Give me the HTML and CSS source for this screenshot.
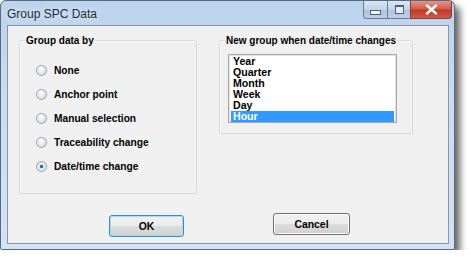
FILE: index.html
```html
<!DOCTYPE html>
<html>
<head>
    <meta charset="utf-8">
    <title>Group SPC Data</title>
    <link rel="stylesheet" href="styles.css">
</head>
<body>
    <div class="window">
        <div class="titlebar">
            <span class="title">Group SPC Data</span>
            <div class="caption-buttons">
                <div class="cap-btn cap-min"><span class="min-glyph"></span></div>
                <div class="cap-btn cap-max"><span class="max-glyph"></span></div>
                <div class="cap-btn cap-close">
                    <svg width="13" height="11" viewBox="0 0 13 11">
                        <path d="M2 1.5 L11 9.5 M11 1.5 L2 9.5" stroke="#fff" stroke-width="2.4" stroke-linecap="round"/>
                    </svg>
                </div>
            </div>
        </div>

        <div class="client">
            <div class="groups">
                <fieldset class="group group-by">
                    <legend>Group data by</legend>
                    <div class="group-body">
                        <div class="radio"><span class="dot"></span>None</div>
                        <div class="radio"><span class="dot"></span>Anchor point</div>
                        <div class="radio"><span class="dot"></span>Manual selection</div>
                        <div class="radio"><span class="dot"></span>Traceability change</div>
                        <div class="radio"><span class="dot checked"></span>Date/time change</div>
                    </div>
                </fieldset>

                <fieldset class="group group-time">
                    <legend>New group when date/time changes</legend>
                    <div class="group-body">
                        <div class="listbox">
                            <div class="item">Year</div>
                            <div class="item">Quarter</div>
                            <div class="item">Month</div>
                            <div class="item">Week</div>
                            <div class="item">Day</div>
                            <div class="item selected">Hour</div>
                        </div>
                    </div>
                </fieldset>
            </div>

            <div class="buttons">
                <div class="btn btn-ok">OK</div>
                <div class="btn btn-cancel">Cancel</div>
            </div>
        </div>
    </div>
</body>
</html>
```

FILE: styles.css
```css
body {
    margin: 0;
    background: #ffffff;
    font-family: "Liberation Sans", Arial, sans-serif;
}

.window {
    width: 455px;
    height: 250px;
    margin: 0;
    border-radius: 6px 6px 2px 2px;
    background: linear-gradient(to bottom, #bcd3ec 0%, #c9dcf1 40%, #d3e3f4 100%);
    box-shadow: 5px 6px 7px rgba(0, 0, 0, 0.6);
    border: 1px solid #5a6a7e;
    box-sizing: border-box;
    display: flex;
    flex-direction: column;
}

.titlebar {
    height: 24px;
    display: flex;
    justify-content: space-between;
    align-items: flex-start;
}

.title {
    font-size: 12px;
    color: #1e2b3a;
    padding: 6px 0 0 6px;
    text-shadow: 0 0 6px rgba(255, 255, 255, 0.9);
}

.caption-buttons {
    display: flex;
    margin-right: 2px;
}

.cap-btn {
    height: 18px;
    border: 1px solid #6a7c93;
    border-top: none;
    box-sizing: border-box;
    display: flex;
    align-items: center;
    justify-content: center;
}

.cap-min {
    width: 24px;
    border-radius: 0 0 0 4px;
    border-right: none;
    background: linear-gradient(to bottom, #d9e5f3 0%, #c2d3e8 50%, #aec3dd 51%, #bccfe6 100%);
}

.cap-max {
    width: 23px;
    border-right: none;
    background: linear-gradient(to bottom, #d9e5f3 0%, #c2d3e8 50%, #aec3dd 51%, #bccfe6 100%);
}

.cap-close {
    width: 42px;
    border-radius: 0 0 4px 0;
    border-color: #8a3b34;
    background: linear-gradient(to bottom, #e49686 0%, #d35f4d 45%, #c03a26 55%, #cf5b45 100%);
}

.min-glyph {
    width: 9px;
    height: 3px;
    margin-top: 5px;
    background: #f4f7fb;
    border: 1px solid #4f5f74;
}

.max-glyph {
    width: 7px;
    height: 6px;
    border: 1px solid #4f5f74;
    border-top-width: 2px;
    background: #e8eef6;
}

.client {
    margin: 0 5px 5px 6px;
    flex: 1;
    background: #f0f0f0;
    border: 1px solid #8796a8;
    display: flex;
    flex-direction: column;
    font-size: 10.2px;
    font-weight: bold;
    color: #000;
}

.groups {
    display: flex;
    align-items: flex-start;
    padding: 9px 0 0 11px;
}

.group {
    margin: 0;
    padding: 0;
    border: 1px solid #d5dadf;
    border-radius: 3px;
    box-shadow: inset 1px 1px 0 #fbfbfb;
    box-sizing: border-box;
    min-width: 0;
}

.group legend {
    padding: 0 1px;
    margin-left: 5px;
    font-size: 10px;
    white-space: nowrap;
}

.group-by {
    width: 178px;
    height: 159px;
}

.group-by .group-body {
    padding: 12px 0 0 16px;
}

.group-time {
    width: 194px;
    height: 99px;
    margin-left: 22px;
}

.group-time .group-body {
    padding: 8px 0 0 8px;
}

.radio {
    height: 24px;
    display: flex;
    align-items: center;
}

.dot {
    width: 11px;
    height: 11px;
    border-radius: 50%;
    border: 1px solid #9aa1a8;
    box-sizing: border-box;
    background: radial-gradient(circle at 40% 35%, #ffffff 0%, #e2e4e6 60%, #cfd3d7 100%);
    margin-right: 7px;
}

.dot.checked {
    background: radial-gradient(circle, #1c5f9c 0%, #2f79bd 22%, #e8eef4 34%, #d5dbe1 100%);
}

.listbox {
    width: 169px;
    height: 69px;
    border: 1px solid #a9a9a9;
    box-shadow: inset 0 0 0 1px #e3e3e3;
    background: #fff;
    box-sizing: border-box;
    padding: 1px 2px;
    font-size: 10.6px;
}

.item {
    height: 11px;
    line-height: 11px;
    padding-left: 2px;
}

.item.selected {
    background: #3399ff;
    color: #fff;
}

.buttons {
    display: flex;
    align-items: flex-start;
    padding: 19px 0 0 101px;
}

.btn {
    height: 22px;
    box-sizing: border-box;
    display: flex;
    align-items: center;
    justify-content: center;
    border-radius: 3px;
    font-size: 10.4px;
}

.btn-ok {
    width: 75px;
    margin-top: 2px;
    border: 1px solid #3c8ac4;
    box-shadow: inset 0 0 0 1px #a6dcf5;
    background: linear-gradient(to bottom, #f2f2f2 0%, #ebebeb 50%, #dddddd 51%, #cfcfcf 100%);
}

.btn-cancel {
    width: 77px;
    margin-left: 89px;
    border: 1px solid #707070;
    box-shadow: inset 0 0 0 1px #fcfcfc;
    background: linear-gradient(to bottom, #f2f2f2 0%, #ebebeb 50%, #dddddd 51%, #cfcfcf 100%);
}
```
